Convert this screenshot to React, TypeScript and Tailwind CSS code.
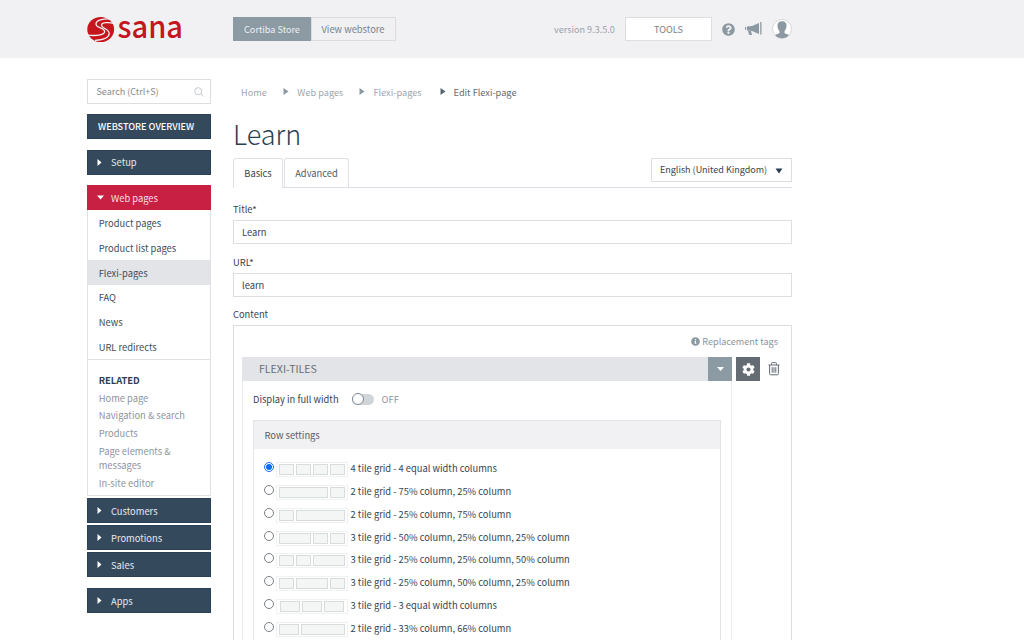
import React, { useState } from "react";
import { FaQuestionCircle, FaInfoCircle, FaCog } from "react-icons/fa";

const webPages = [
  "Product pages",
  "Product list pages",
  "Flexi-pages",
  "FAQ",
  "News",
  "URL redirects",
];

const related = [
  "Home page",
  "Navigation & search",
  "Products",
  "Page elements & messages",
  "In-site editor",
];

// cols are the tile widths in the little preview, in px
const grids = [
  { label: "4 tile grid - 4 equal width columns", cols: [15, 15, 15, 15] },
  { label: "2 tile grid - 75% column, 25% column", cols: [49, 15] },
  { label: "2 tile grid - 25% column, 75% column", cols: [15, 49] },
  { label: "3 tile grid - 50% column, 25% column, 25% column", cols: [32, 15, 15] },
  { label: "3 tile grid - 25% column, 25% column, 50% column", cols: [15, 15, 32] },
  { label: "3 tile grid - 25% column, 50% column, 25% column", cols: [15, 32, 15] },
  { label: "3 tile grid - 3 equal width columns", cols: [20, 20, 20] },
  { label: "2 tile grid - 33% column, 66% column", cols: [20, 44] },
];

function Logo() {
  return (
    <svg width="100" height="58" viewBox="0 -15 100 58" className="block overflow-visible">
      <ellipse cx="13.7" cy="14.5" rx="13.4" ry="12.6" fill="#c4161c" />
      <path
        d="M24 4.200C18 3.200 9 4.800 9 8.900c0 4.300 8.600 3.700 8.600 7.600 0 3.400-7 4.600-17 3.700"
        fill="none"
        stroke="#f1f1f4"
        strokeWidth="1.300"
      />
      <path
        d="M27 8.300C21 7 14.500 7.300 14.500 10.300c0 3.200 7.700 3.400 7.700 8.200 0 3.700-5.200 6.200-14.200 6.900"
        fill="none"
        stroke="#f1f1f4"
        strokeWidth="1.300"
      />
      <text
        x="30.500"
        y="23.300"
        fontSize="31"
        fontWeight="500"
        fill="#c4161c"
        textLength="65.500"
        lengthAdjust="spacingAndGlyphs"
      >
        sana
      </text>
    </svg>
  );
}

function Megaphone() {
  return (
    <svg width="17" height="14" viewBox="0 0 17 14" fill="#8c99a2" className="block">
      <path d="M0 5h1.200v2.800H0zM2 4.500l5-.6 7-3v11L7 8.900l-5-.3zM15.200 0h1.300v12.600h-1.300zM3 9h3l1 3.900H4.200z" />
    </svg>
  );
}

function Avatar() {
  return (
    <svg width="20" height="20" viewBox="0 0 20 20" className="block">
      <circle cx="10" cy="10" r="9.500" fill="#fff" stroke="#d5d8dc" />
      <path
        d="M10 2.200c-3.400 0-4.700 2-4.500 4.700.1 2.100.9 4 2 5.100v2c-.6 1-3.200 1.200-4.500 2.100a9.200 9.200 0 0 0 14 0c-1.300-.9-3.900-1.100-4.500-2.100v-2c1.100-1.100 1.900-3 2-5.100.2-2.700-1.100-4.700-4.500-4.700z"
        fill="#8c99a2"
      />
    </svg>
  );
}

function Trash() {
  return (
    <svg width="12" height="14" viewBox="0 0 12 14" fill="none" stroke="#646b73" className="block">
      <path d="M.5 3h11M3.500 2.800V1.700c0-.7.400-1.100 1.100-1.100h2.800c.7 0 1.100.4 1.100 1.100v1.100M1.600 3v8.700c0 .7.400 1.100 1.100 1.100h6.600c.7 0 1.100-.4 1.100-1.100V3M4.200 5.200v5.500M6 5.200v5.500M7.800 5.200v5.500" />
    </svg>
  );
}

function Arrow({ className }: { className: string }) {
  return (
    <svg width="6" height="7" viewBox="0 0 6 7" className={className}>
      <path d="M.5 0v7L5.500 3.500z" fill="currentColor" />
    </svg>
  );
}

function MenuItem({ label, className = "" }: { label: string; className?: string }) {
  return (
    <div
      className={`h-[25px] shrink-0 flex items-center bg-[#35495d] border border-[#2c4056] pl-[9px] text-[#e6e9ec] ${className}`}
    >
      <svg width="5" height="7" viewBox="0 0 5 7" className="mr-[9px]">
        <path d="M.5 0v7L4.500 3.500z" fill="#fff" />
      </svg>
      {label}
    </div>
  );
}

function Sidebar() {
  return (
    <aside className="w-[124px] flex flex-col">
      <div className="h-[25px] flex items-center justify-between border border-[#dcdee1] pl-[8.500px] pr-[6px] text-[9px] text-[#838b93]">
        Search (Ctrl+S)
        <svg width="10" height="10" viewBox="0 0 10 10" fill="none" stroke="#c3c8cd">
          <circle cx="4.200" cy="4.200" r="3.500" />
          <path d="M6.800 6.800 9.500 9.500" />
        </svg>
      </div>
      <div className="mt-[10px] h-[25px] flex items-center bg-[#35495d] border border-[#2c4056] pl-[10px] pb-[1px] text-[9.15px] text-white font-medium">
        WEBSTORE OVERVIEW
      </div>
      <MenuItem label="Setup" className="mt-[11px] pb-[1px]" />

      <div className="mt-[10px] h-[25px] flex items-center bg-[#c82043] pl-[10px] text-[#f8dfe4]">
        <svg width="7" height="5" viewBox="0 0 7 5" className="mr-[7px]">
          <path d="M0 .5h7L3.500 4.500z" fill="#fff" />
        </svg>
        Web pages
      </div>
      <div className="border-x border-b border-[#dfe1e4] h-[150px] pt-[0.6px] text-[#414d59]">
        {webPages.map((page) => (
          <div
            key={page}
            className={`h-[24.8px] flex items-center pl-[10.700px] ${
              page === "Flexi-pages" ? "bg-[#e3e4e8]" : ""
            }`}
          >
            {page}
          </div>
        ))}
      </div>
      <div className="border-x border-b border-[#dfe1e4] h-[136px] pt-[12.600px] pl-[10.700px] pr-5 text-[#8d959d]">
        <div className="text-[#2b3f54] font-bold leading-[14px] mb-[4px]">RELATED</div>
        {related.map((item) => (
          <div key={item} className="leading-[14px] mb-[3.800px] whitespace-normal">
            {item}
          </div>
        ))}
      </div>

      <MenuItem label="Customers" className="mt-[2px]" />
      <MenuItem label="Promotions" className="mt-[2px]" />
      <MenuItem label="Sales" className="mt-[2px]" />
      <MenuItem label="Apps" className="mt-[11px]" />
    </aside>
  );
}

function Field({ label, value }: { label: string; value: string }) {
  return (
    <div className="mb-[11px]">
      <div className="h-[14px] leading-[14px] mb-[4px]">{label}</div>
      <div className="h-[24px] border border-[#dcdee1] flex items-center pl-[8px]">{value}</div>
    </div>
  );
}

function FlexiTiles() {
  const [selected, setSelected] = useState(0);

  return (
    <div className="w-[490px] shrink-0">
      <div className="flex h-[24px]">
        <div className="grow bg-[#e3e4e8] flex items-center pl-[17px] pb-[1px] text-[10.6px] text-[#656d76]">
          FLEXI-TILES
        </div>
        <div className="w-[24px] bg-[#8c9aa4] flex items-center justify-center">
          <svg width="7" height="4" viewBox="0 0 7 4">
            <path d="M0 0h7L3.500 4z" fill="#fff" />
          </svg>
        </div>
      </div>
      <div className="border-x border-[#e9eaec] px-[10px]">
        <div className="h-[39px] flex items-center pb-[3px]">
          <span>Display in full width</span>
          <span className="ml-[13px] w-[22px] h-[11px] rounded-full bg-[#d2d5d8] flex items-center">
            <span className="w-[12px] h-[12px] shrink-0 rounded-full bg-white border border-[#7a8894]" />
          </span>
          <span className="ml-[8px] text-[#8d959d]">OFF</span>
        </div>
        <div className="border border-[#e3e4e7]">
          <div className="h-[28px] bg-[#f1f1f3] pl-[10.500px] flex items-center text-[#56606a]">
            Row settings
          </div>
          <div className="pt-[8px] pl-[10px] h-[240px]">
            {grids.map((grid, i) => (
              <div
                key={grid.label}
                className="h-[22.75px] flex items-center cursor-pointer"
                onClick={() => setSelected(i)}
              >
                <span
                  className={`w-[10px] h-[10px] mb-[2px] rounded-full border flex items-center justify-center shrink-0 ${
                    selected === i ? "border-[#1a73f0]" : "border-[#7b7f84]"
                  }`}
                >
                  {selected === i && <span className="w-[6px] h-[6px] rounded-full bg-[#0a6cf5]" />}
                </span>
                <span className="ml-[2px] mt-[3px] w-[72px] h-[15px] border border-[#f0f1f2] flex items-center justify-center gap-[2px]">
                  {grid.cols.map((w, k) => (
                    <span
                      key={k}
                      className="h-[11px] border border-[#d9dcdd] bg-[#f4f6f6]"
                      style={{ width: w }}
                    />
                  ))}
                </span>
                <span className="ml-[2.600px]">{grid.label}</span>
              </div>
            ))}
          </div>
        </div>
      </div>
    </div>
  );
}

export default function App() {
  return (
    <div className="w-[1024px] h-[640px] overflow-hidden bg-white text-[9.35px] leading-[14px] text-[#38444f] font-['Noto_Sans_CJK_SC',sans-serif] whitespace-nowrap">
      <header className="h-[58px] bg-[#f1f1f4] flex items-center pl-[87px] text-[9.1px]">
        <Logo />
        <div className="ml-[46px] flex h-[24px] text-[#77828b]">
          <div className="w-[78px] bg-[#8c9aa4] text-[#eef0f2] flex items-center justify-center">
            Cortiba Store
          </div>
          <div className="w-[85px] border border-[#d9dbdf] flex items-center justify-center pr-[1px] text-[9.35px]">
            View webstore
          </div>
        </div>
        <span className="ml-[158px] w-[61px] text-[#98a1a9]">version 9.3.5.0</span>
        <div className="ml-[10px] w-[87px] h-[24px] bg-white border border-[#dcdee1] flex items-center justify-center text-[#77828b]">
          TOOLS
        </div>
        <FaQuestionCircle className="ml-[10px] text-[#8c99a2]" size={13} />
        <div className="ml-[9.500px]">
          <Megaphone />
        </div>
        <div className="ml-[10px]">
          <Avatar />
        </div>
      </header>

      <div className="flex pl-[87px] pt-[21px]">
        <Sidebar />

        <main className="ml-[22px] w-[559px]">
          <nav className="flex items-center h-[26px] pl-[8px] pb-[1px] text-[9.2px] text-[#a0a7ae]">
            <span>Home</span>
            <Arrow className="ml-[16.500px] mr-[8px] text-[#8c99a2]" />
            <span>Web pages</span>
            <Arrow className="ml-[16px] mr-[8px] text-[#8c99a2]" />
            <span>Flexi-pages</span>
            <Arrow className="ml-[18px] mr-[8px] text-[#56656f]" />
            <span className="text-[#626c75]">Edit Flexi-page</span>
          </nav>
          <h1 className="h-[53px] pt-[9px] text-[27px] leading-[40px] font-light text-[#2b3f54]">
            Learn
          </h1>

          <div className="flex items-start h-[30px] border-b border-[#dcdee5]">
            <div className="w-[50px] h-[30px] border border-b-0 border-[#dfe1e5] rounded-t-[3px] bg-white flex items-center justify-center pb-[1px]">
              Basics
            </div>
            <div className="ml-[1px] w-[65px] h-[29px] border border-b-0 border-r border-[#dfe1e5] rounded-t-[3px] flex items-center justify-center text-[#505b65]">
              Advanced
            </div>
            <div className="ml-auto w-[141px] h-[24px] border border-[#dcdee1] flex items-center justify-between pl-[8px] pr-[8px] text-[9px]">
              English (United Kingdom)
              <svg width="8" height="6" viewBox="0 0 8 6" className="shrink-0 mt-[2px]">
                <path d="M.5.500h7L4 5.500z" fill="#2b3f54" />
              </svg>
            </div>
          </div>

          <div className="pt-[14px]">
            <Field label="Title*" value="Learn" />
            <Field label="URL*" value="learn" />
            <div className="h-[14px] leading-[13px] mb-[3px]">Content</div>
          </div>

          <div className="border border-[#dcdee1] h-[340px] pl-[8px] pt-[8px]">
            <div className="h-[14px] mb-[9px] pr-[13px] flex items-center justify-end gap-[2px] text-[9.1px] text-[#8c959e]">
              <FaInfoCircle size={9} className="text-[#8c99a2]" />
              Replacement tags
            </div>
            <div className="flex items-start">
              <FlexiTiles />
              <div className="ml-[4px] w-[24px] h-[24px] bg-[#646b73] flex items-center justify-center">
                <FaCog size={13} color="#fff" />
              </div>
              <div className="ml-[8px] mt-[5px]">
                <Trash />
              </div>
            </div>
          </div>
        </main>
      </div>
    </div>
  );
}
